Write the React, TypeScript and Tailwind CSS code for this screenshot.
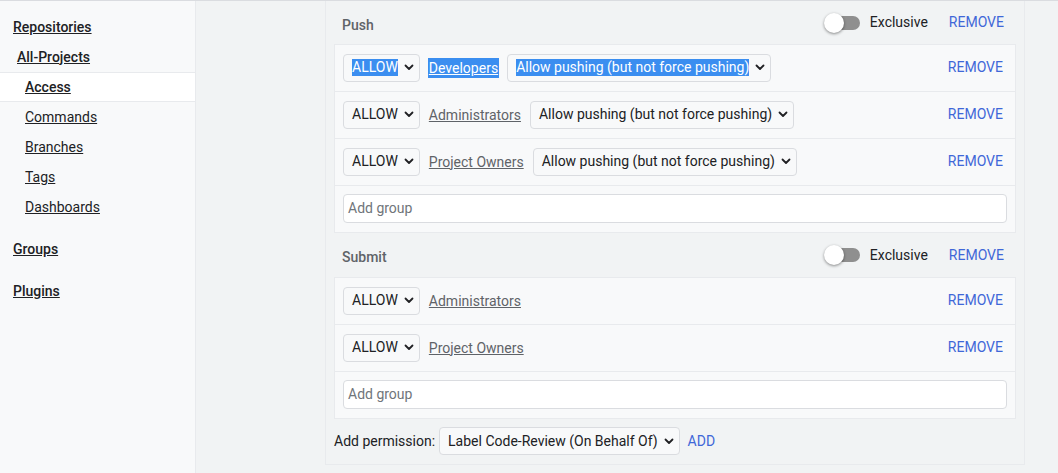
const SEL = 'bg-[#3b8ef0] text-white';

function Chevron() {
  return (
    <svg width="10" height="7" viewBox="0 0 10 7" className="shrink-0">
      <path d="M1.5 1.5 L5 5 L8.5 1.5" fill="none" stroke="#202124" strokeWidth="1.8" strokeLinecap="round" strokeLinejoin="round" />
    </svg>
  );
}

function FakeSelect({ value, selected = false }: { value: string; selected?: boolean }) {
  return (
    <div className="flex h-[28px] shrink-0 items-center gap-[6px] rounded-[4px] border border-[#dadce0] bg-[#f8f9fa] pl-[8px] pr-[5px] text-[14px] text-[#202124]">
      <span className={`leading-[17px] ${selected ? SEL : ''}`}>{value}</span>
      <Chevron />
    </div>
  );
}

function Toggle() {
  return (
    <div className="relative flex h-[22px] w-[38px] items-center">
      <div className="ml-[2px] h-[14px] w-[34px] rounded-full bg-[#8f8f8f]" />
      <div className="absolute left-0 top-[1px] h-[20px] w-[20px] rounded-full bg-white shadow-[0_1px_3px_rgba(0,0,0,0.45)]" />
    </div>
  );
}

type Rule = { group: string; range?: string; selected?: boolean };

function RuleRow({ rule }: { rule: Rule }) {
  return (
    <div className="flex h-[47px] items-center border-b border-[#e8eaed] pb-[1px] pl-[8px] pr-[12px]">
      <div className="flex items-center gap-[8px]">
        <FakeSelect value="ALLOW" selected={rule.selected} />
        <a className={`px-[1px] text-[14px] leading-[20px] underline ${rule.selected ? SEL : 'text-[#5f6368]'}`}>{rule.group}</a>
        {rule.range && <FakeSelect value={rule.range} selected={rule.selected} />}
      </div>
      <span className="ml-auto text-[14px] text-[#3f67d8]">REMOVE</span>
    </div>
  );
}

function Permission({ name, rules, first = false }: { name: string; rules: Rule[]; first?: boolean }) {
  return (
    <div>
      <div className={`flex items-center pl-[8px] pr-[12px] ${first ? 'h-[43px]' : 'h-[44px]'}`}>
        <span className="pt-[5px] text-[14px] font-medium text-[#5f6368]">{name}</span>
        <div className="ml-auto flex items-center">
          <Toggle />
          <span className="ml-[8px] text-[14px] text-[#202124]">Exclusive</span>
          <span className="ml-[21px] text-[14px] text-[#3f67d8]">REMOVE</span>
        </div>
      </div>
      <div className="border border-[#e8eaed] bg-[#f8f9fa]">
        {rules.map(r => <RuleRow key={r.group} rule={r} />)}
        <div className="flex h-[46px] items-center pb-[1px] pl-[8px] pr-[8px]">
          <div className="flex h-[29px] w-full items-center rounded-[4px] border border-[#dadce0] bg-white pl-[4px] text-[14px] text-[#70757a]">
            Add group
          </div>
        </div>
      </div>
    </div>
  );
}

const PUSH_RANGE = 'Allow pushing (but not force pushing)';

function NavLink({ label, indent, strong = false, active = false, extraTop = false }: { label: string; indent: string; strong?: boolean; active?: boolean; extraTop?: boolean }) {
  return (
    <div className={`flex h-[30px] items-center ${indent} ${active ? 'border-y border-[#e8eaed] bg-white' : ''} ${extraTop ? 'mt-[12px]' : ''}`}>
      <a className={`text-[14px] text-[#202124] underline ${strong ? 'font-medium' : ''}`}>{label}</a>
    </div>
  );
}

export default function App() {
  return (
    <div className="flex h-[473px] w-[1058px] flex-col overflow-hidden border-t border-[#dadce0] bg-[#f1f3f4] font-['Roboto',sans-serif]">
      <div className="flex flex-1">
        <aside className="w-[196px] shrink-0 border-r border-[#e8eaed] bg-[#f8f9fa] pt-[11px]">
          <NavLink label="Repositories" indent="pl-[13px]" strong />
          <NavLink label="All-Projects" indent="pl-[17px]" strong />
          <NavLink label="Access" indent="pl-[25px]" strong active />
          <NavLink label="Commands" indent="pl-[25px]" />
          <NavLink label="Branches" indent="pl-[25px]" />
          <NavLink label="Tags" indent="pl-[25px]" />
          <NavLink label="Dashboards" indent="pl-[25px]" />
          <NavLink label="Groups" indent="pl-[13px]" strong extraTop />
          <NavLink label="Plugins" indent="pl-[13px]" strong extraTop />
        </aside>
        <main className="flex-1 pl-[129px]">
          <section className="w-[700px] border-x border-b border-[#e8eaed] px-[8px]">
            <Permission
              name="Push"
              first
              rules={[
                { group: 'Developers', range: PUSH_RANGE, selected: true },
                { group: 'Administrators', range: PUSH_RANGE },
                { group: 'Project Owners', range: PUSH_RANGE },
              ]}
            />
            <Permission
              name="Submit"
              rules={[{ group: 'Administrators' }, { group: 'Project Owners' }]}
            />
            <div className="flex items-center pb-[9px] pt-[8px] text-[14px] text-[#202124]">
              <span>Add permission:</span>
              <div className="ml-[4px]">
                <FakeSelect value="Label Code-Review (On Behalf Of)" />
              </div>
              <span className="ml-[8px] text-[#3f67d8]">ADD</span>
            </div>
          </section>
        </main>
      </div>
    </div>
  );
}
